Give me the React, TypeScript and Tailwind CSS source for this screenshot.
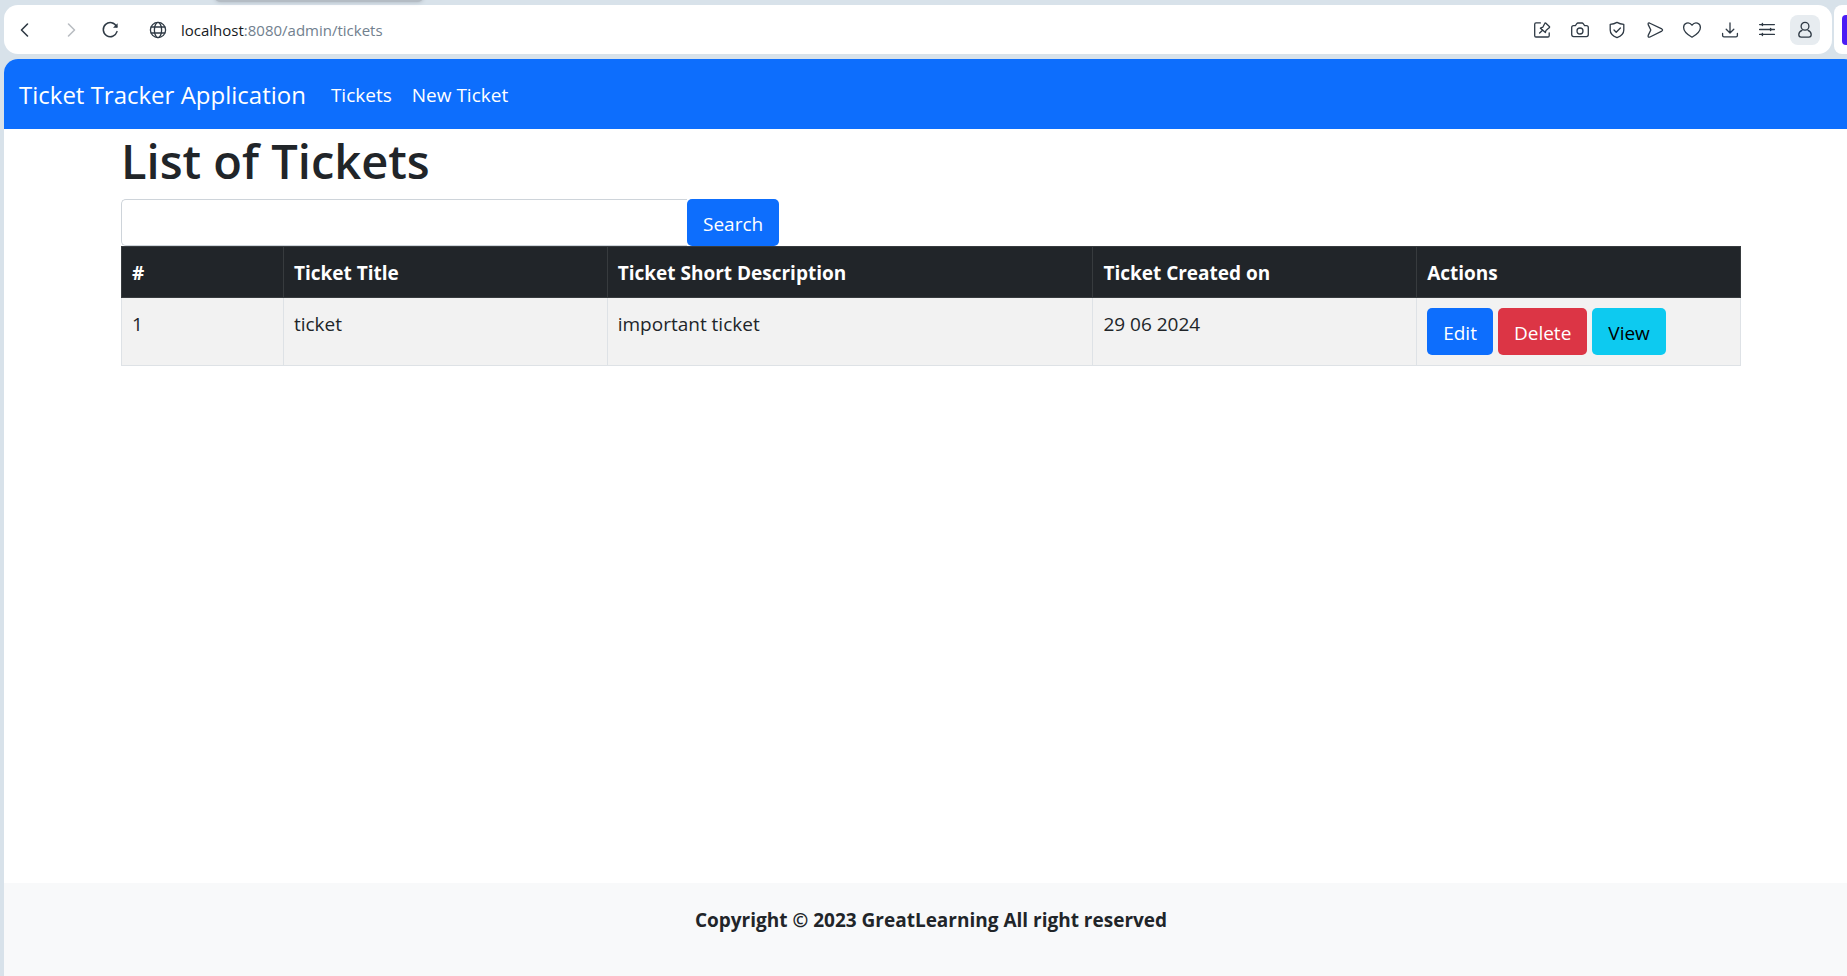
import type { ReactNode } from "react";

function Icon({ children }: { children: ReactNode }) {
  return (
    <svg
      width="20"
      height="20"
      viewBox="0 0 20 20"
      fill="none"
      stroke="currentColor"
      strokeWidth="1.3"
      strokeLinecap="round"
      strokeLinejoin="round"
      aria-hidden="true"
    >
      {children}
    </svg>
  );
}

function ToolButton({ label, active = false, children }: { label: string; active?: boolean; children: ReactNode }) {
  return (
    <button
      type="button"
      aria-label={label}
      className={
        active
          ? "flex size-[30px] items-center justify-center rounded-lg bg-[#e7ecf0]"
          : "flex size-[30px] items-center justify-center rounded-lg"
      }
    >
      <Icon>{children}</Icon>
    </button>
  );
}

function BrowserBar() {
  return (
    <div className="flex h-[49px] gap-0.5">
      <div className="flex min-w-0 flex-1 items-center rounded-[14px] bg-white pr-3 pl-1.5 text-[#2f3a45]">
        <ToolButton label="Back">
          <path d="M12.5 4 L6.5 10 L12.5 16" strokeWidth="1.6" />
        </ToolButton>
        <div className="ml-4 text-[#b9bdc2]">
          <ToolButton label="Forward">
            <path d="M7.5 4 L13.5 10 L7.5 16" strokeWidth="1.6" />
          </ToolButton>
        </div>
        <div className="ml-[9px]">
          <ToolButton label="Reload">
            <path d="M16.6 6.6 A7 7 0 1 0 17 11.6" strokeWidth="1.5" />
            <path d="M17.6 3.2 V7.8 H13 Z" fill="currentColor" stroke="none" />
          </ToolButton>
        </div>
        <div className="ml-[18px] flex size-[30px] items-center justify-center">
          <Icon>
            <circle cx="10" cy="10" r="7.6" />
            <ellipse cx="10" cy="10" rx="3.6" ry="7.6" />
            <path d="M3.2 7 H16.8 M3.2 13 H16.8" />
          </Icon>
        </div>
        <div className="ml-2 font-[Open_Sans,sans-serif] text-[15px] whitespace-nowrap text-[#71808e]">
          <span className="text-[#15191d]">localhost</span>:8080/admin/tickets
        </div>
        <div className="ml-auto flex w-[293px] items-center justify-between">
          <ToolButton label="Pin page">
            <path d="M8.4 2.9 H4 Q2.7 2.9 2.7 4.2 V15.7 Q2.7 17 4 17 H15.9 Q17.2 17 17.2 15.7 V12.8" />
            <path d="M13.6 3 L17.6 6.8 Q17.8 7.8 16.8 8 L14 10.4 L13.4 12.6 L8.4 8.2 L10.8 7.2 L12.6 3.8 Q13 2.8 13.6 3 Z" />
            <path d="M10.6 10.2 L7.6 13" />
          </ToolButton>
          <ToolButton label="Snapshot">
            <path d="M3.6 5.6 H5.4 L6.8 3.7 Q7.2 3 8 3 H12 Q12.8 3 13.2 3.7 L14.6 5.6 H16.4 Q18.3 5.6 18.3 7.5 V14.6 Q18.3 16.6 16.4 16.6 H3.6 Q1.7 16.6 1.7 14.6 V7.5 Q1.7 5.6 3.6 5.6 Z" />
            <circle cx="10" cy="11" r="3" />
          </ToolButton>
          <ToolButton label="Privacy protection">
            <path d="M10 2.4 Q13 4.2 16.8 4.4 V10 Q16.8 15 10 17.7 Q3.2 15 3.2 10 V4.4 Q7 4.2 10 2.4 Z" />
            <path d="M7 10 L9.2 12.2 L13.4 8" />
          </ToolButton>
          <ToolButton label="Share">
            <path d="M4.4 3 L16.8 8.9 Q18.3 10 16.8 11.1 L5 17 Q2.6 17.8 3.2 15.4 L5.8 10 L3.2 4.6 Q2.8 2.6 4.4 3 Z" />
          </ToolButton>
          <ToolButton label="Favorites">
            <path d="M10 17.2 C5.5 14.6 1.6 11.4 1.6 7.4 C1.6 3.2 6.8 1 10 5.2 C13.2 1 18.4 3.2 18.4 7.4 C18.4 11.4 14.5 14.6 10 17.2 Z" />
          </ToolButton>
          <ToolButton label="Downloads">
            <path d="M10 3 V12.6 M6.2 9.2 L10 13 L13.8 9.2 M2.6 13.4 V15.4 Q2.6 16.8 4 16.8 H16 Q17.4 16.8 17.4 15.4 V13.4" />
          </ToolButton>
          <ToolButton label="Easy setup">
            <path d="M2.6 4.6 H17.4 M2.6 9.5 H17.4 M2.6 14.4 H17.4" />
            <path d="M5.4 3.6 V5.6 M13.6 8.5 V10.5 M5.4 13.4 V15.4" strokeWidth="1.5" />
          </ToolButton>
          <ToolButton label="Profile" active>
            <circle cx="10" cy="6.3" r="3.9" />
            <path d="M7 10.3 Q3.8 11.6 3.8 14.6 Q3.8 17.2 6.2 17.2 H13.8 Q16.2 17.2 16.2 14.6 Q16.2 11.6 13 10.3" />
          </ToolButton>
        </div>
      </div>
      <div className="flex w-[13px] items-center overflow-hidden rounded-l-lg bg-white pl-2">
        <div className="h-[30px] w-full rounded-l-sm bg-[#4a1cf5]" />
      </div>
    </div>
  );
}

const columns = [
  { label: "#", width: "w-[10%]" },
  { label: "Ticket Title", width: "w-[20%]" },
  { label: "Ticket Short Description", width: "w-[30%]" },
  { label: "Ticket Created on", width: "w-[20%]" },
  { label: "Actions", width: "w-[20%]" },
];

const tickets = [{ id: 1, title: "ticket", description: "important ticket", created: "29 06 2024" }];

const cell = "border border-[#dee2e6] px-2.5 pt-[11px] pb-[9px] align-top";
const button = "inline-flex h-[47px] items-center justify-center rounded-[5px] px-4 pt-0.5";

export default function App() {
  return (
    <div className="relative flex min-h-screen flex-col overflow-hidden bg-[#d8e2ea] pt-[5px] pl-1 font-[Open_Sans,Noto_Sans,sans-serif] text-[19px] leading-[30px] text-[#212529]">
      <div className="absolute -top-2 left-[215px] h-2.5 w-[208px] rounded-md bg-[#b4bcc4] shadow-[0_0_4px_#a9b2bb]" />
      <BrowserBar />

      <div className="mt-[5px] -mr-[11px] flex flex-1 flex-col overflow-hidden rounded-t-[14px] bg-white">
        <nav className="flex h-[70px] items-center bg-[#0d6efd] px-[15px] pt-0.5 text-white">
          <a href="#home" className="text-[24px]">
            Ticket Tracker Application
          </a>
          <a href="#tickets" className="ml-[25px]">
            Tickets
          </a>
          <a href="#new" className="ml-5">
            New Ticket
          </a>
        </nav>

        <main className="mx-auto w-full max-w-[1620px] flex-1">
          <h1 className="mb-2 pt-0.5 text-[47px] leading-[60px] font-semibold">List of Tickets</h1>
          <form className="flex" onSubmit={(e) => e.preventDefault()}>
            <input
              type="text"
              aria-label="Search tickets"
              className="h-[47px] w-[566px] rounded-l-[5px] border border-r-0 border-[#ced4da] bg-white px-4 outline-none"
            />
            <button type="submit" className={`${button} bg-[#0d6efd] text-white`}>
              Search
            </button>
          </form>
          <table className="w-full table-fixed border-collapse">
            <thead>
              <tr className="bg-[#212529] text-left text-white">
                {columns.map((c) => (
                  <th key={c.label} className={`${c.width} border border-[#373b3e] px-2.5 pt-[11px] pb-[9px] font-bold`}>
                    {c.label}
                  </th>
                ))}
              </tr>
            </thead>
            <tbody>
              {tickets.map((t) => (
                <tr key={t.id} className="bg-[#f2f2f2]">
                  <td className={cell}>{t.id}</td>
                  <td className={cell}>{t.title}</td>
                  <td className={cell}>{t.description}</td>
                  <td className={cell}>{t.created}</td>
                  <td className="border border-[#dee2e6] p-2.5 align-top">
                    <div className="flex gap-[5px]">
                      <a href="#edit" className={`${button} bg-[#0d6efd] text-white`}>
                        Edit
                      </a>
                      <a href="#delete" className={`${button} bg-[#dc3545] text-white`}>
                        Delete
                      </a>
                      <a href="#view" className={`${button} bg-[#0dcaf0] text-black`}>
                        View
                      </a>
                    </div>
                  </td>
                </tr>
              ))}
            </tbody>
          </table>
        </main>

        <footer className="h-[93px] bg-[#f8f9fa] pt-[22px] text-center font-bold">
          Copyright © 2023 GreatLearning All right reserved
        </footer>
      </div>
    </div>
  );
}
